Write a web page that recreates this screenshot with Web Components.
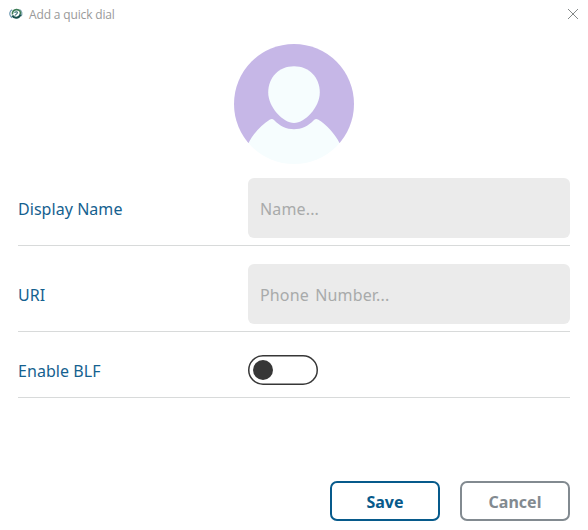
<!DOCTYPE html>
<html lang="en">
<head>
  <meta charset="utf-8">
  <title>Add a quick dial</title>
  <style>
    body {
      margin: 0;
      background: #fff;
      font-family: 'Noto Sans', 'Open Sans', sans-serif;
    }
  </style>
</head>
<body>
  <quick-dial-window>
    <title-bar slot="title">Add a quick dial</title-bar>
    <user-avatar></user-avatar>
    <form-row label="Display Name"><text-field placeholder="Name..."></text-field></form-row>
    <form-row label="URI"><text-field placeholder="Phone Number..."></text-field></form-row>
    <form-row label="Enable BLF" compact><toggle-switch></toggle-switch></form-row>
    <dialog-button slot="actions" primary>Save</dialog-button>
    <dialog-button slot="actions">Cancel</dialog-button>
  </quick-dial-window>

  <script>
    class QuickDialWindow extends HTMLElement {
      constructor() {
        super();
        this.attachShadow({ mode: 'open' });
      }

      connectedCallback() {
        this.shadowRoot.innerHTML = `
          <style>
            :host {
              display: flex;
              flex-direction: column;
              box-sizing: border-box;
              width: 588px;
              height: 530px;
              background: #fff;
            }

            .content {
              flex: 1;
              display: flex;
              flex-direction: column;
              padding: 14px 18px 0;
            }

            .actions {
              display: flex;
              justify-content: flex-end;
              gap: 20px;
              padding: 0 18px 9px;
            }
          </style>
          <slot name="title"></slot>
          <div class="content"><slot></slot></div>
          <div class="actions"><slot name="actions"></slot></div>
        `;
      }
    }

    class TitleBar extends HTMLElement {
      constructor() {
        super();
        this.attachShadow({ mode: 'open' });
      }

      connectedCallback() {
        this.shadowRoot.innerHTML = `
          <style>
            :host {
              display: flex;
              align-items: center;
              box-sizing: border-box;
              height: 30px;
              padding: 0 9px 2px;
              color: #999;
              font-family: 'Open Sans', 'Noto Sans', sans-serif;
              font-size: 12px;
              letter-spacing: -0.15px;
              line-height: 26px;
            }

            .logo {
              margin-right: 6px;
            }

            .title {
              flex: 1;
              padding-top: 2px;
            }
          </style>
          <svg class="logo" width="14" height="12" viewBox="0 0 14 12" fill="none">
            <path d="M3.200 1.800C.7 3 .2 6 1.500 8c.5.8 1 1.300 1.700 1.600" stroke="#6f9ab4" stroke-width="1.200"/>
            <path d="M10.500 1.500c2.600 1.500 3.100 4.300 1.500 6.600" stroke="#7fa6b0" stroke-width="1.200"/>
            <path d="M3.500 6.500C3 3.500 5 1.500 7.600 1.600c3 .1 4.600 2.400 3.600 4.900" stroke="#3d7c55" stroke-width="1.600"/>
            <path d="M3.300 7.500C5 10.600 9.700 10.700 11.600 6.500" stroke="#174f4c" stroke-width="2"/>
            <path d="M5.400 4.500c1.600-1.100 3.300-.7 3 .4-.2.900-1.600 1.700-2.700 2.600" stroke="#3d7278" stroke-width="1.100"/>
          </svg>
          <span class="title"><slot></slot></span>
          <svg class="close" width="12" height="12" viewBox="0 0 12 12">
            <path d="M1 1l10 10M11 1L1 11" stroke="#858989" stroke-width="1"/>
          </svg>
        `;
      }
    }

    class UserAvatar extends HTMLElement {
      constructor() {
        super();
        this.attachShadow({ mode: 'open' });
      }

      connectedCallback() {
        this.shadowRoot.innerHTML = `
          <style>
            :host {
              display: block;
              align-self: center;
              width: 120px;
              height: 120px;
              margin-bottom: 14px;
            }

            svg {
              display: block;
            }
          </style>
          <svg width="120" height="120" viewBox="0 0 120 120">
            <clipPath id="round"><circle cx="60" cy="60" r="60"/></clipPath>
            <g clip-path="url(#round)">
              <rect width="120" height="99" fill="#c6b7e7"/>
              <path d="M60 22.300c15 0 25.800 11 25.800 26.200C85.800 63 71 79 60 79S34.200 63 34.200 48.500C34.200 33.300 45 22.300 60 22.300z" fill="#f6fdfe"/>
              <path d="M14.500 99C19 90 27.500 80.500 36 75.500q2.200-1.300 4 .5C46 82.200 52.500 85.200 60 85.200S74 82.200 80 76q1.800-1.800 4-.5C92.500 80.500 101 90 105.500 99V120H14.500z" fill="#f6fdfe"/>
            </g>
          </svg>
        `;
      }
    }

    class FormRow extends HTMLElement {
      constructor() {
        super();
        this.attachShadow({ mode: 'open' });
      }

      connectedCallback() {
        this.shadowRoot.innerHTML = `
          <style>
            :host {
              display: grid;
              grid-template-columns: 230px 1fr;
              align-items: center;
              padding-bottom: 7px;
              border-bottom: 1px solid #d8dada;
            }

            :host(:not(:last-of-type)) {
              margin-bottom: 18px;
            }

            :host([compact]) {
              margin-top: 5px;
              padding-bottom: 12px;
            }

            .label {
              padding-top: 2px;
              color: #15618f;
              font-size: 16px;
              letter-spacing: 0.05px;
              line-height: 24px;
            }
          </style>
          <span class="label">${this.getAttribute('label')}</span>
          <slot></slot>
        `;
      }
    }

    class TextField extends HTMLElement {
      constructor() {
        super();
        this.attachShadow({ mode: 'open' });
      }

      connectedCallback() {
        this.shadowRoot.innerHTML = `
          <style>
            :host {
              display: block;
            }

            input {
              display: block;
              box-sizing: border-box;
              width: 100%;
              height: 60px;
              padding: 1px 12px 0;
              border: 0;
              border-radius: 6px;
              outline: none;
              background: #ebebeb;
              color: #333;
              font: inherit;
              font-size: 16px;
              letter-spacing: 0.15px;
              word-spacing: 2px;
            }

            input::placeholder {
              color: #a8aaaa;
              opacity: 1;
            }
          </style>
          <input type="text" placeholder="${this.getAttribute('placeholder')}">
        `;
      }
    }

    class ToggleSwitch extends HTMLElement {
      constructor() {
        super();
        this.attachShadow({ mode: 'open' });
      }

      connectedCallback() {
        this.shadowRoot.innerHTML = `
          <style>
            :host {
              display: flex;
              align-items: center;
              box-sizing: border-box;
              width: 70px;
              height: 30px;
              padding: 0 5px;
              border-radius: 15px;
              box-shadow: inset 0 0 0 1.5px #373737;
              cursor: pointer;
            }

            :host([checked]) {
              justify-content: flex-end;
            }

            .knob {
              width: 20px;
              height: 20px;
              border-radius: 50%;
              background: #373737;
            }
          </style>
          <div class="knob"></div>
        `;
        this.addEventListener('click', () => this.toggleAttribute('checked'));
      }
    }

    class DialogButton extends HTMLElement {
      constructor() {
        super();
        this.attachShadow({ mode: 'open' });
      }

      connectedCallback() {
        this.shadowRoot.innerHTML = `
          <style>
            :host {
              display: block;
              color: #828a90;
            }

            :host([primary]) {
              color: #075a8b;
            }

            button {
              display: block;
              box-sizing: border-box;
              width: 110px;
              height: 40px;
              padding: 2px 0 0;
              border: 2px solid currentColor;
              border-radius: 7px;
              background: #fff;
              color: inherit;
              font: inherit;
              font-size: 16px;
              font-weight: 700;
              cursor: pointer;
            }
          </style>
          <button><slot></slot></button>
        `;
      }
    }

    customElements.define('quick-dial-window', QuickDialWindow);
    customElements.define('title-bar', TitleBar);
    customElements.define('user-avatar', UserAvatar);
    customElements.define('form-row', FormRow);
    customElements.define('text-field', TextField);
    customElements.define('toggle-switch', ToggleSwitch);
    customElements.define('dialog-button', DialogButton);
  </script>
</body>
</html>
